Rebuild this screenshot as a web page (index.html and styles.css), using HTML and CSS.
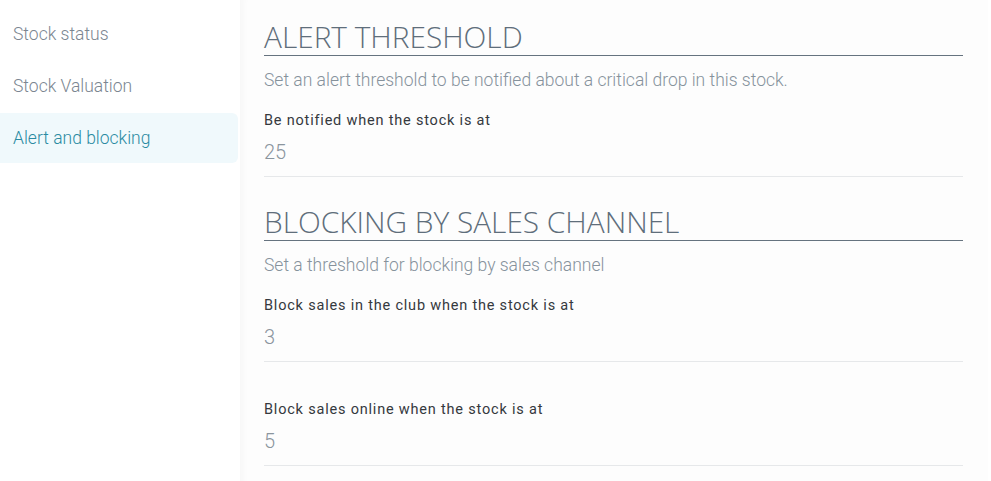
FILE: index.html
```html
<!DOCTYPE html>
<html lang="en">
<head>
<meta charset="utf-8">
<title>Alert and blocking</title>
<link rel="stylesheet" href="styles.css">
</head>
<body>
<div class="page">
  <nav class="sidebar">
    <a class="nav-item">Stock status</a>
    <a class="nav-item">Stock Valuation</a>
    <a class="nav-item active">Alert and blocking</a>
  </nav>
  <main class="content">
    <section class="section">
      <h2 class="section-title">ALERT THRESHOLD</h2>
      <p class="section-desc">Set an alert threshold to be notified about a critical drop in this stock.</p>
      <div class="field">
        <label class="field-label">Be notified when the stock is at</label>
        <div class="field-value">25</div>
      </div>
    </section>
    <section class="section">
      <h2 class="section-title">BLOCKING BY SALES CHANNEL</h2>
      <p class="section-desc">Set a threshold for blocking by sales channel</p>
      <div class="field">
        <label class="field-label">Block sales in the club when the stock is at</label>
        <div class="field-value">3</div>
      </div>
      <div class="field">
        <label class="field-label">Block sales online when the stock is at</label>
        <div class="field-value">5</div>
      </div>
    </section>
  </main>
</div>
</body>
</html>
```
FILE: styles.css
```css
html, body {
  margin: 0;
  padding: 0;
  background: #ffffff;
  height: 100%;
}
body {
  font-family: Roboto, "Liberation Sans", sans-serif;
}
.page {
  display: flex;
  min-height: 481px;
  padding-right: 3px;
}
.sidebar {
  width: 240px;
  flex: none;
  padding-top: 8px;
  display: flex;
  flex-direction: column;
}
.nav-item {
  display: block;
  width: 238px;
  box-sizing: border-box;
  height: 52px;
  line-height: 52px;
  padding-left: 13px;
  font-size: 17.5px;
  font-weight: 300;
  color: #7b8691;
  border-radius: 0 6px 6px 0;
}
.nav-item.active {
  background: #f0f9fc;
  color: #2a8ba2;
  height: 50px;
  line-height: 50px;
  margin-top: 1px;
}
.content {
  flex: 1;
  background: #fdfdfd;
  box-shadow: inset 8px 0 6px -4px rgba(0, 0, 0, 0.025);
  padding: 19px 25px 0 24px;
}
.section {
  margin-bottom: 27px;
}
.section-title {
  margin: 0;
  font-family: "Open Sans", sans-serif;
  font-weight: 300;
  font-size: 29.8px;
  line-height: 36px;
  color: #5f6e7b;
  border-bottom: 1px solid #66737f;
}
.section-desc {
  margin: 12px 0 0;
  font-size: 17.5px;
  font-weight: 300;
  line-height: 24px;
  color: #86929c;
}
.field {
  border-bottom: 1px solid #e6e8ea;
  padding-top: 19px;
  padding-bottom: 12px;
}
.field + .field {
  margin-top: 19px;
}
.field-label {
  display: block;
  font-size: 14.5px;
  letter-spacing: 0.8px;
  line-height: 20px;
  color: #35393e;
}
.field-value {
  margin-top: 9px;
  font-size: 20px;
  font-weight: 300;
  line-height: 24px;
  color: #8b959e;
}
```
